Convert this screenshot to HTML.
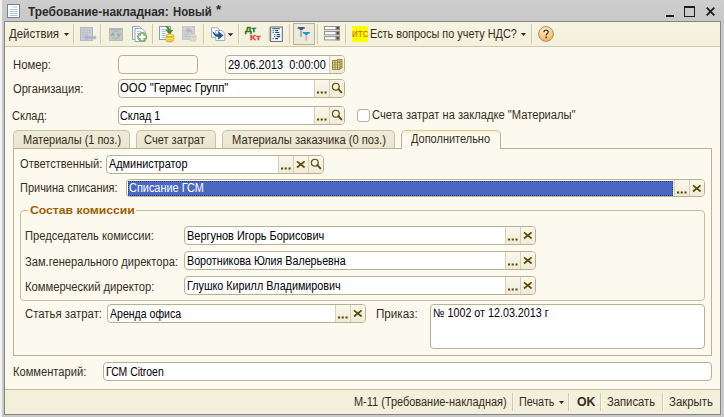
<!DOCTYPE html>
<html><head><meta charset="utf-8"><title>1C</title>
<style>
*{box-sizing:border-box;margin:0;padding:0}
html,body{width:724px;height:417px;overflow:hidden}
body{position:relative;background:#c9c9c9;font-family:"Liberation Sans",sans-serif;font-size:12px;color:#2e2818}
.a{position:absolute}
.t{position:absolute;white-space:pre;line-height:14px;height:14px;transform-origin:0 50%}
.f{position:absolute;border:1px solid #b7b092;border-radius:4px;background:#fff;overflow:hidden}
.btn{position:absolute;top:0;bottom:0;width:15px;background:linear-gradient(#faf8ec,#efebd8);border-left:1px solid #d6d0b6}
.sep{position:absolute;top:24px;height:20px;width:2px;border-left:1px solid #cec8ad;border-right:1px solid #f9f7ea}
.bsep{position:absolute;top:393px;height:18px;width:2px;border-left:1px solid #d0cab0;border-right:1px solid #fbf9ee}
.tab{position:absolute;top:130px;height:18px;border:1px solid #c9c3a6;border-bottom:none;border-radius:5px 5px 0 0;background:linear-gradient(#efebd8,#e9e5ce)}
svg{position:absolute;overflow:visible}

</style></head><body>
<!-- frame -->
<div class="a" style="left:0;top:0;width:2px;height:417px;background:#f2f2f2"></div>
<div class="a" style="left:2px;top:0;width:722px;height:21px;background:linear-gradient(#cecece,#c8c8c8)"></div>
<div class="a" style="left:4px;top:21px;width:717px;height:394px;background:#858585"></div>
<div class="a" style="left:5px;top:22px;width:715px;height:392px;background:#fcfaee"></div>
<!-- title icon -->
<svg style="left:7px;top:4px" width="14" height="15" viewBox="0 0 14 15"><rect x="0.5" y="0.5" width="12" height="13" fill="#fdfeff" stroke="#788290"/><path d="M5.5 3h5M2.500 5.500h8M2.500 7.500h8M2.500 9.500h8M2.500 11.500h8" stroke="#b4c6de" stroke-width="1"/></svg>
<!-- window controls -->
<div class="a" style="left:666px;top:14.5px;width:8px;height:2.5px;background:#1e1e1e"></div>
<div class="a" style="left:684px;top:6px;width:11px;height:11px;border:1px solid #1e1e1e;border-top-width:2px"></div>
<svg style="left:706px;top:7px" width="9" height="9" viewBox="0 0 9 9"><path d="M0.7 0.7L8.3 8.3M8.3 0.7L0.7 8.3" stroke="#1e1e1e" stroke-width="1.9"/></svg>
<!-- toolbar -->
<div class="a" style="left:5px;top:22px;width:715px;height:24px;background:linear-gradient(#f6f3e1,#f3f0db)"></div>
<div class="a" style="left:5px;top:46px;width:715px;height:1px;background:#cdc7ab"></div>
<svg style="left:64px;top:33px" width="5" height="3" viewBox="0 0 5 3"><path d="M0 0h5L2.5 3z" fill="#2e2818"/></svg>
<div class="sep" style="left:73px"></div>
<div class="sep" style="left:100px"></div>
<div class="sep" style="left:152px"></div>
<div class="sep" style="left:203px"></div>
<div class="sep" style="left:238px"></div>
<div class="sep" style="left:289px"></div>
<div class="sep" style="left:317px"></div>
<div class="sep" style="left:345px"></div>
<div class="sep" style="left:531px"></div>
<!-- icon1: gray doc with left arrow -->
<svg style="left:80px;top:27px" width="17" height="15" viewBox="0 0 17 15"><rect x="0.5" y="0.5" width="12" height="13" fill="#c7ccd4" stroke="#b3b9c3"/><path d="M2 3.500h9M2 5.500h9M2 7.500h6M2 9.500h3" stroke="#b6bdc8" stroke-width="1" stroke-dasharray="1.500 0.700"/><path d="M3.600 10.500L8 6.700v2.400h8v2.800h-8v2.400z" fill="#a9b5c6" stroke="#c2cbd7" stroke-width="0.600"/></svg>
<!-- icon2: gray refresh -->
<svg style="left:109px;top:28px" width="14" height="13" viewBox="0 0 14 13"><rect x="0.500" y="0.500" width="13" height="12" fill="#c4c8c7" stroke="#b7bcbb"/><rect x="0.500" y="0.500" width="13" height="1.800" fill="#afb5b7"/><path d="M3.800 5.600A3.200 3.200 0 0 1 9.600 4.600M9.800 8.200A3.200 3.200 0 0 1 4 9.200" fill="none" stroke="#a6b8ab" stroke-width="1.100"/><path d="M1.400 7.800L3.800 4.600L6.200 7.800zM7.400 5.800L9.800 9L12.200 5.800z" fill="#94ad9c"/></svg>
<!-- icon3: copy with green plus -->
<svg style="left:132px;top:26px" width="16" height="17" viewBox="0 0 16 17"><path d="M0.500 0.500h7l2 2v11h-9z" fill="#f2f6fc" stroke="#93a4be"/><path d="M3 2.500h7l3 3v10h-10z" fill="#fafcff" stroke="#93a4be"/><path d="M5 5.5h4M5 7.5h3" stroke="#b9c9de"/><circle cx="10.200" cy="11" r="4.500" fill="#94ba86" stroke="#7aa66c" stroke-width="1"/><path d="M10.2 8v6M7.2 11h6" stroke="#fff" stroke-width="2.2"/></svg>
<!-- icon4: doc + green arrow + coins -->
<svg style="left:159px;top:26px" width="16" height="17" viewBox="0 0 16 17"><rect x="0.500" y="0.500" width="11" height="13" fill="#fbfdff" stroke="#8c9cb6"/><path d="M2.5 3.5h6M2.5 5.5h4M2.5 7.5h4M2.5 9.5h4M2.5 11.5h4" stroke="#a9c0de"/><path d="M6.5 0.6Q10.6 0.4 10.6 4.2H13.9L10.4 8.2L6.9 4.2H9Q8.9 1.6 6.5 0.6z" fill="#3c9422" stroke="#2c7418" stroke-width="0.5"/><ellipse cx="10.8" cy="9.4" rx="3.8" ry="1.5" fill="#fbe27a" stroke="#d9a514" stroke-width="0.7"/><path d="M7 9.4v5a3.8 1.5 0 0 0 7.6 0v-5a3.8 1.5 0 0 1 -7.6 0z" fill="#f3c024" stroke="#d9a514" stroke-width="0.7"/><path d="M7 11.2a3.8 1.5 0 0 0 7.6 0M7 12.9a3.8 1.5 0 0 0 7.6 0" fill="none" stroke="#fbe88c" stroke-width="0.8"/></svg>
<!-- icon5: gray doc + undo + coins -->
<svg style="left:182px;top:26px" width="16" height="17" viewBox="0 0 16 17"><rect x="0.500" y="0.500" width="12" height="13" fill="#cdd1d7" stroke="#c3c8cf"/><path d="M2.500 8.500h4M2.500 10.500h4" stroke="#bac5d3"/><path d="M3.200 4.200L6.600 1.200v1.900q3.800 0.200 4 5.200q-1.100 -2.800 -4 -2.700v1.900z" fill="#c0b2ae"/><ellipse cx="11" cy="9.700" rx="3.200" ry="1.250" fill="#dedad0" stroke="#cbc6b8" stroke-width="0.500"/><path d="M7.800 9.700v4.400a3.200 1.250 0 0 0 6.400 0v-4.400a3.200 1.250 0 0 1 -6.400 0z" fill="#d5d0c3" stroke="#cbc6b8" stroke-width="0.500"/><path d="M7.800 11.200a3.200 1.250 0 0 0 6.400 0M7.800 12.700a3.200 1.250 0 0 0 6.400 0" fill="none" stroke="#e4e1d7" stroke-width="0.700"/></svg>
<!-- icon6: docs + blue arrow + dropdown -->
<svg style="left:211px;top:27px" width="24" height="15" viewBox="0 0 24 15"><path d="M0.500 0.800h6l2.500 2.500v7h-8.500z" fill="#f4f7fb" stroke="#a3acba"/><path d="M4.800 3.500h6l3 3v7h-9z" fill="#fbfdff" stroke="#a3acba"/><path d="M1.800 4.800Q4 8 7.400 7.300V4.600L12.200 8.400L7.400 12.200V9.600Q3.400 10 1.800 4.800z" fill="#1d5a94" stroke="#173f6e" stroke-width="0.500"/><path d="M16.700 6.200h5.600l-2.800 3z" fill="#2e2818"/></svg>
<!-- DtKt -->
<!-- list doc icon -->
<svg style="left:268px;top:26px" width="16" height="17" viewBox="0 0 16 17"><rect x="0.700" y="1.200" width="2" height="14" fill="#c4c4be"/><rect x="2.700" y="1" width="11.600" height="14.400" fill="#fdfeff" stroke="#5f646b" stroke-width="1"/><path d="M4.300 2.700h7.600" stroke="#1d4d7b" stroke-width="1"/><path d="M4.600 4.600h1.100M7.200 4.600h3M4.600 6.500h1.100M7.200 6.500h4M6.200 8.600h1.100M8.600 8.600h3.600M6.200 10.600h1.100M8.600 10.600h3.600M4.600 12.600h1.100M7.200 12.600h3" stroke="#1d4d7b" stroke-width="1.100"/></svg>
<!-- pressed T button -->
<div class="a" style="left:293px;top:23px;width:22px;height:22px;border:1px solid #b9b396;background:#eeead7"></div>
<svg style="left:297px;top:27px" width="14" height="14" viewBox="0 0 14 14"><path d="M0.700 0.100h7v1.600h-1.200l-1.400 1.500h-1.800l-1.400 -1.500h-1.200z" fill="#2e5f97"/><rect x="3.100" y="3.400" width="2" height="6.500" fill="#a3abb3"/><path d="M5.800 5h7v1.600h-1.200l-1.400 1.500h-1.800l-1.400 -1.500h-1.200z" fill="#1d97cc"/><rect x="8.300" y="8.300" width="2" height="5.200" fill="#c5b9bb"/></svg>
<!-- fields icon -->
<svg style="left:324px;top:26px" width="16" height="15" viewBox="0 0 16 15"><g id="rw"><rect x="0.500" y="0.500" width="15" height="3.200" fill="#fff" stroke="#8f8f8f"/><rect x="12" y="0.500" width="3.500" height="3.200" fill="#777" stroke="#8f8f8f"/><path d="M12.700 1.400h2.200l-1.100 1.500z" fill="#111"/></g><use href="#rw" y="5.100"/><use href="#rw" y="10.200"/></svg>
<!-- ITS -->
<div class="a" style="left:352px;top:26px;width:16px;height:16px;background:#ffff00"></div>
<svg style="left:521px;top:33px" width="5" height="3" viewBox="0 0 5 3"><path d="M0 0h5L2.500 3z" fill="#2e2818"/></svg>
<!-- help -->
<svg style="left:538px;top:26px" width="16" height="16" viewBox="0 0 16 16"><defs><radialGradient id="hg" cx="0.450" cy="0.250" r="0.800"><stop offset="0" stop-color="#fff4e0"/><stop offset="0.550" stop-color="#f9cf8a"/><stop offset="1" stop-color="#f0a640"/></radialGradient></defs><circle cx="8" cy="8" r="7.400" fill="url(#hg)" stroke="#a8926e" stroke-width="1"/><path d="M5.900 6.200Q5.900 4.100 8 4.100Q10.200 4.100 10.200 6Q10.200 7.100 9.100 7.800Q8.200 8.400 8.200 9.400" fill="none" stroke="#523818" stroke-width="1.350"/><rect x="7.400" y="10.500" width="1.600" height="1.600" fill="#4b3212"/></svg>

<!-- bottom bar -->
<div class="a" style="left:5px;top:389px;width:715px;height:25px;background:#f2efdb;border-top:1px solid #c3bd9f"></div>
<div class="bsep" style="left:512px"></div>
<div class="bsep" style="left:568px"></div>
<div class="bsep" style="left:600px"></div>
<div class="bsep" style="left:662px"></div>
<svg style="left:559px;top:401px" width="5" height="3" viewBox="0 0 5 3"><path d="M0 0h5L2.5 3z" fill="#2e2818"/></svg>
<!-- tabs + panel -->
<div class="tab" style="left:13px;width:117px"></div>
<div class="tab" style="left:136px;width:80px"></div>
<div class="tab" style="left:222px;width:173px"></div>
<div class="a" style="left:13px;top:148px;width:699px;height:208px;border:1px solid #b7b197;background:#fcfaee"></div>
<div class="tab" style="left:401px;width:100px;top:130px;height:19px;background:linear-gradient(#f7efcf,#fcfaee 4px);border-color:#b7b197;border-top:1px solid #dcc98c"></div>
<!-- group box -->
<div class="a" style="left:20px;top:210px;width:685px;height:91px;border:1px solid #c3bda1;border-radius:4px"></div>
<div class="a" style="left:28px;top:208px;width:108px;height:5px;background:#fcfaee"></div>
<!-- fields -->
<div class="f" style="left:118px;top:55px;width:80px;height:19px;background:#fcfaee"></div>
<div class="f" style="left:225px;top:55px;width:120px;height:19px;background:#fff"><div class="btn" style="right:0px"><svg width="14" height="17" viewBox="0 0 14 17" style="left:0;top:0"><path d="M2.500 4.500h5v-1h4.500v8.500h-2v1.500h-7.500z" fill="#f0e5ae" stroke="#7d6d1c" stroke-width="0.800"/><path d="M2.500 6.700h7.500M2.500 9h7.500M2.500 11.300h7.500M5 4.500v9M7.500 3.500v10M10 3.500v9.500M7.500 5.700h4.500M10 8h2M10 10.200h2" stroke="#7d6d1c" stroke-width="0.700" fill="none"/></svg></div></div>
<div class="f" style="left:118px;top:79px;width:227px;height:19px;background:#fff"><div class="btn" style="right:15px"><svg width="14" height="17" viewBox="0 0 14 17" style="left:0;top:0"><path d="M2 11.4h2.1v2.1h-2.1zM5.700 11.400h2.100v2.100h-2.100zM9.500 11.400h2.100v2.100h-2.100z" fill="#5b4a06"/></svg></div><div class="btn" style="right:0px"><svg width="14" height="17" viewBox="0 0 14 17" style="left:0;top:0"><circle cx="5.800" cy="6.650" r="3.400" fill="none" stroke="#5b4a06" stroke-width="1.200"/><path d="M8.400 9.200L11.400 12.300" stroke="#5b4a06" stroke-width="1.900" stroke-linecap="round"/></svg></div></div>
<div class="f" style="left:118px;top:106px;width:227px;height:19px;background:#fff"><div class="btn" style="right:15px"><svg width="14" height="17" viewBox="0 0 14 17" style="left:0;top:0"><path d="M2 11.4h2.1v2.1h-2.1zM5.700 11.400h2.100v2.100h-2.100zM9.500 11.400h2.100v2.100h-2.100z" fill="#5b4a06"/></svg></div><div class="btn" style="right:0px"><svg width="14" height="17" viewBox="0 0 14 17" style="left:0;top:0"><circle cx="5.800" cy="6.650" r="3.400" fill="none" stroke="#5b4a06" stroke-width="1.200"/><path d="M8.400 9.200L11.400 12.300" stroke="#5b4a06" stroke-width="1.900" stroke-linecap="round"/></svg></div></div>
<div class="f" style="left:106px;top:155px;width:218px;height:19px;background:#fff"><div class="btn" style="right:30px"><svg width="14" height="17" viewBox="0 0 14 17" style="left:0;top:0"><path d="M2 11.4h2.1v2.1h-2.1zM5.700 11.400h2.100v2.100h-2.100zM9.500 11.400h2.100v2.100h-2.100z" fill="#5b4a06"/></svg></div><div class="btn" style="right:15px"><svg width="14" height="17" viewBox="0 0 14 17" style="left:0;top:0"><path d="M3 5.300L10.600 11.500M10.600 5.300L3 11.500" stroke="#5b4a06" stroke-width="1.700" fill="none"/></svg></div><div class="btn" style="right:0px"><svg width="14" height="17" viewBox="0 0 14 17" style="left:0;top:0"><circle cx="5.800" cy="6.650" r="3.400" fill="none" stroke="#5b4a06" stroke-width="1.200"/><path d="M8.400 9.200L11.400 12.300" stroke="#5b4a06" stroke-width="1.900" stroke-linecap="round"/></svg></div></div>
<div class="f" style="left:126px;top:179px;width:579px;height:18px;background:#fff"><div class="a" style="left:1px;top:1px;width:545px;height:15px;background:#4a68c2;outline:1px dotted #2a3a86;outline-offset:-1px"></div><div class="btn" style="right:15px"><svg width="14" height="17" viewBox="0 0 14 17" style="left:0;top:0"><path d="M2 11.4h2.1v2.1h-2.1zM5.700 11.400h2.100v2.100h-2.100zM9.500 11.400h2.100v2.100h-2.100z" fill="#5b4a06"/></svg></div><div class="btn" style="right:0px"><svg width="14" height="17" viewBox="0 0 14 17" style="left:0;top:0"><path d="M3 5.300L10.600 11.500M10.600 5.300L3 11.500" stroke="#5b4a06" stroke-width="1.700" fill="none"/></svg></div></div>
<div class="f" style="left:184px;top:226px;width:352px;height:19px;background:#fff"><div class="btn" style="right:15px"><svg width="14" height="17" viewBox="0 0 14 17" style="left:0;top:0"><path d="M2 11.4h2.1v2.1h-2.1zM5.700 11.400h2.100v2.100h-2.100zM9.500 11.400h2.100v2.100h-2.100z" fill="#5b4a06"/></svg></div><div class="btn" style="right:0px"><svg width="14" height="17" viewBox="0 0 14 17" style="left:0;top:0"><path d="M3 5.300L10.600 11.500M10.600 5.300L3 11.500" stroke="#5b4a06" stroke-width="1.700" fill="none"/></svg></div></div>
<div class="f" style="left:184px;top:251px;width:352px;height:19px;background:#fff"><div class="btn" style="right:15px"><svg width="14" height="17" viewBox="0 0 14 17" style="left:0;top:0"><path d="M2 11.4h2.1v2.1h-2.1zM5.700 11.400h2.100v2.100h-2.100zM9.500 11.400h2.100v2.100h-2.100z" fill="#5b4a06"/></svg></div><div class="btn" style="right:0px"><svg width="14" height="17" viewBox="0 0 14 17" style="left:0;top:0"><path d="M3 5.300L10.600 11.500M10.600 5.300L3 11.500" stroke="#5b4a06" stroke-width="1.700" fill="none"/></svg></div></div>
<div class="f" style="left:184px;top:276px;width:352px;height:19px;background:#fff"><div class="btn" style="right:15px"><svg width="14" height="17" viewBox="0 0 14 17" style="left:0;top:0"><path d="M2 11.4h2.1v2.1h-2.1zM5.700 11.400h2.100v2.100h-2.100zM9.500 11.400h2.100v2.100h-2.100z" fill="#5b4a06"/></svg></div><div class="btn" style="right:0px"><svg width="14" height="17" viewBox="0 0 14 17" style="left:0;top:0"><path d="M3 5.300L10.600 11.500M10.600 5.300L3 11.500" stroke="#5b4a06" stroke-width="1.700" fill="none"/></svg></div></div>
<div class="f" style="left:107px;top:304px;width:259px;height:19px;background:#fff"><div class="btn" style="right:15px"><svg width="14" height="17" viewBox="0 0 14 17" style="left:0;top:0"><path d="M2 11.4h2.1v2.1h-2.1zM5.700 11.400h2.100v2.100h-2.100zM9.500 11.400h2.100v2.100h-2.100z" fill="#5b4a06"/></svg></div><div class="btn" style="right:0px"><svg width="14" height="17" viewBox="0 0 14 17" style="left:0;top:0"><path d="M3 5.300L10.600 11.500M10.600 5.300L3 11.500" stroke="#5b4a06" stroke-width="1.700" fill="none"/></svg></div></div>
<div class="f" style="left:430px;top:304px;width:275px;height:45px;background:#fff"></div>
<div class="f" style="left:103px;top:362px;width:609px;height:19px;background:#fff"></div>
<div class="f" style="left:357px;top:109px;width:13px;height:13px;border-radius:3px"></div>

<!-- texts -->
<div class="t" style="left:27.6px;top:4.6px;transform:scaleX(0.9943);font-weight:bold;color:#2b2b2b">Требование-накладная:</div>
<div class="t" style="left:172.7px;top:4.6px;transform:scaleX(0.9410);font-weight:bold;color:#2b2b2b">Новый</div>
<div class="t" style="left:215.9px;top:2.8px;transform:scaleX(1.1000);font-weight:bold;color:#2b2b2b">*</div>
<div class="t" style="left:9.2px;top:27.0px;transform:scaleX(0.9519);color:#352d1c">Действия</div>
<div class="t" style="left:370.1px;top:27.0px;transform:scaleX(0.9081);color:#352d1c">Есть вопросы по учету НДС?</div>
<div class="t" style="left:12.7px;top:57.8px;transform:scaleX(0.9421);color:#352d1c">Номер:</div>
<div class="t" style="left:12.5px;top:82.1px;transform:scaleX(0.9284);color:#352d1c">Организация:</div>
<div class="t" style="left:12.3px;top:108.5px;transform:scaleX(0.9167);color:#352d1c">Склад:</div>
<div class="t" style="left:227.7px;top:58.1px;transform:scaleX(0.9162);color:#000">29.06.2013  0:00:00</div>
<div class="t" style="left:120.3px;top:81.1px;transform:scaleX(0.9460);color:#000">ООО "Гермес Групп"</div>
<div class="t" style="left:120.3px;top:108.6px;transform:scaleX(0.9000);color:#000">Склад 1</div>
<div class="t" style="left:371.6px;top:108.2px;transform:scaleX(0.9304);color:#352d1c">Счета затрат на закладке "Материалы"</div>
<div class="t" style="left:22.7px;top:132.7px;transform:scaleX(0.9123);color:#352d1c">Материалы (1 поз.)</div>
<div class="t" style="left:144.3px;top:132.7px;transform:scaleX(0.9231);color:#352d1c">Счет затрат</div>
<div class="t" style="left:231.8px;top:132.7px;transform:scaleX(0.9311);color:#352d1c">Материалы заказчика (0 поз.)</div>
<div class="t" style="left:411.3px;top:132.2px;transform:scaleX(0.9151);color:#352d1c">Дополнительно</div>
<div class="t" style="left:19.5px;top:157.1px;transform:scaleX(0.9241);color:#352d1c">Ответственный:</div>
<div class="t" style="left:109.4px;top:157.1px;transform:scaleX(0.9058);color:#000">Администратор</div>
<div class="t" style="left:19.7px;top:181.2px;transform:scaleX(0.9152);color:#352d1c">Причина списания:</div>
<div class="t" style="left:128.5px;top:181.2px;transform:scaleX(0.9100);color:#fff">Списание ГСМ</div>
<div class="t" style="left:30.0px;top:202.8px;transform:scaleX(1.0592);font-size:11.5px;font-weight:bold;color:#9c5e05">Состав комиссии</div>
<div class="t" style="left:24.7px;top:229.2px;transform:scaleX(0.9299);color:#352d1c">Председатель комиссии:</div>
<div class="t" style="left:24.5px;top:254.6px;transform:scaleX(0.9288);color:#352d1c">Зам.генерального директора:</div>
<div class="t" style="left:24.5px;top:279.6px;transform:scaleX(0.9336);color:#352d1c">Коммерческий директор:</div>
<div class="t" style="left:187.3px;top:228.8px;transform:scaleX(0.9121);color:#000">Вергунов Игорь Борисович</div>
<div class="t" style="left:187.3px;top:254.0px;transform:scaleX(0.8932);color:#000">Воротникова Юлия Валерьевна</div>
<div class="t" style="left:187.3px;top:278.6px;transform:scaleX(0.8971);color:#000">Глушко Кирилл Владимирович</div>
<div class="t" style="left:24.9px;top:307.3px;transform:scaleX(0.9468);color:#352d1c">Статья затрат:</div>
<div class="t" style="left:110.4px;top:306.8px;transform:scaleX(0.8790);color:#000">Аренда офиса</div>
<div class="t" style="left:375.6px;top:306.6px;transform:scaleX(0.9707);color:#352d1c">Приказ:</div>
<div class="t" style="left:432.8px;top:306.2px;transform:scaleX(0.8945);color:#000">№ 1002 от 12.03.2013 г</div>
<div class="t" style="left:12.8px;top:365.0px;transform:scaleX(0.9286);color:#352d1c">Комментарий:</div>
<div class="t" style="left:105.7px;top:364.5px;transform:scaleX(0.8677);color:#000">ГСМ Citroen</div>
<div class="t" style="left:244.9px;top:22.9px;transform:scaleX(1.2333);font-size:7.5px;font-weight:bold;color:#2a7420;-webkit-text-stroke:0.3px #2a7420">Дт</div>
<div class="t" style="left:249.7px;top:30.9px;transform:scaleX(1.3000);font-size:7.5px;font-weight:bold;color:#e6463a;-webkit-text-stroke:0.3px #e6463a">Кт</div>
<div class="t" style="left:351.6px;top:27.0px;transform:scaleX(0.9563);font-size:8.5px;color:#dc4a00">ИТС</div>
<div class="t" style="left:354.3px;top:394.6px;transform:scaleX(0.9127);color:#352d1c">М-11 (Требование-накладная)</div>
<div class="t" style="left:518.8px;top:394.6px;transform:scaleX(0.9026);color:#352d1c">Печать</div>
<div class="t" style="left:576.6px;top:394.6px;transform:scaleX(1.0222);font-weight:bold;color:#352d1c">OK</div>
<div class="t" style="left:607.1px;top:394.6px;transform:scaleX(0.9360);color:#352d1c">Записать</div>
<div class="t" style="left:669.4px;top:394.6px;transform:scaleX(0.9489);color:#352d1c">Закрыть</div>
</body></html>
